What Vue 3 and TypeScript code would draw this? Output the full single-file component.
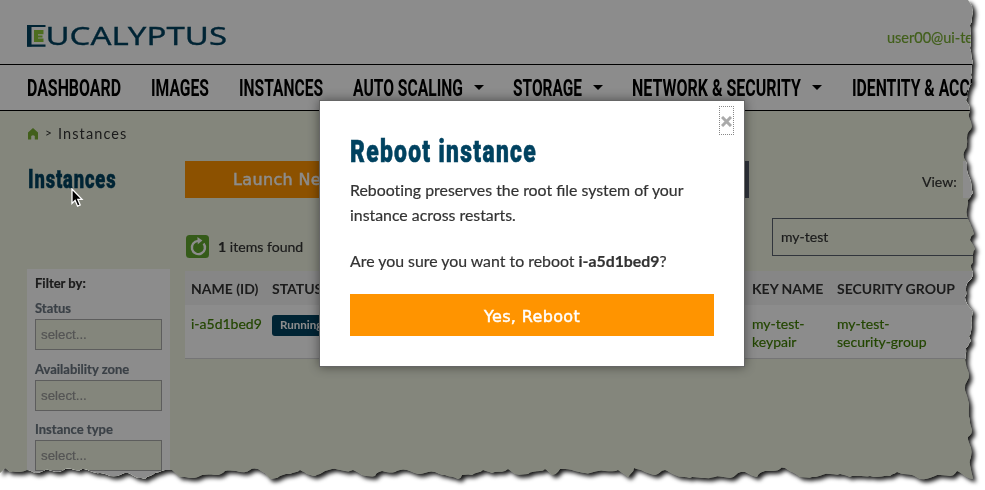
<script setup lang="ts">
interface NavItem { label: string; width: number; menu: boolean }
type Point = [number, number]

const nav: NavItem[] = [
  { label: 'DASHBOARD', width: 94, menu: false },
  { label: 'IMAGES', width: 58, menu: false },
  { label: 'INSTANCES', width: 84, menu: false },
  { label: 'AUTO SCALING', width: 110, menu: true },
  { label: 'STORAGE', width: 69, menu: true },
  { label: 'NETWORK & SECURITY', width: 169, menu: true },
  { label: 'IDENTITY & ACCESS', width: 146, menu: false },
]

const filters: string[] = ['Status', 'Availability zone', 'Instance type']

// Torn paper outline: right side top to bottom, then bottom side right to left.
const rightSide: Point[] = [
  [968, 0], [972, 6], [973, 12], [970, 25], [971, 35], [970, 48], [973, 62], [971, 75], [972, 83], [967, 94], [966, 100],
  [969, 105], [969, 114], [971, 122], [971, 129], [967, 138], [965, 150], [964, 158], [967, 164], [968, 174], [971, 182],
  [973, 193], [968, 200], [967, 216], [971, 226], [974, 234], [970, 240], [975, 249], [973, 258], [971, 265], [973, 272],
  [969, 281], [966, 290], [965, 297], [967, 304], [973, 312], [972, 325], [969, 336], [971, 341], [966, 348], [966, 364],
  [969, 375], [965, 388], [968, 400], [970, 420], [972, 430], [968, 437], [971, 448], [970, 460], [973, 479],
]
const bottomSide: Point[] = [
  [965, 476], [957, 471], [950, 476], [935, 476], [920, 479], [912, 475], [897, 472], [890, 476], [870, 476], [850, 477],
  [840, 474], [830, 474], [812, 477], [800, 477], [792, 472], [785, 468], [780, 469], [765, 471], [757, 477], [745, 472],
  [738, 473], [730, 478], [715, 477], [705, 478], [690, 478], [675, 475], [665, 470], [655, 475], [645, 472], [634, 468],
  [628, 477], [618, 470], [605, 471], [590, 473], [575, 471], [560, 469], [552, 475], [545, 469], [540, 471], [528, 474],
  [515, 474], [508, 469], [505, 471], [492, 473], [483, 470], [472, 475], [462, 475], [458, 479], [445, 475], [435, 472],
  [420, 474], [407, 470], [395, 472], [382, 471], [375, 476], [362, 475], [353, 470], [345, 471], [332, 469], [325, 471],
  [320, 474], [315, 476], [307, 474], [300, 470], [290, 474], [280, 476], [270, 479], [265, 473], [258, 469], [250, 470],
  [240, 472], [225, 471], [215, 475], [200, 476], [190, 478], [180, 477], [172, 470], [165, 470], [155, 473], [145, 479],
  [138, 478], [128, 473], [120, 475], [110, 476], [100, 473], [90, 471], [82, 469], [75, 470], [65, 469], [55, 472],
  [45, 470], [35, 473], [27, 470], [20, 472], [10, 472], [5, 468], [0, 473],
]

function roughen(points: Point[]): Point[] {
  const out: Point[] = []
  for (let i = 0; i < points.length - 1; i++) {
    const [ax, ay] = points[i]
    const [bx, by] = points[i + 1]
    const steps = Math.max(1, Math.round(Math.hypot(bx - ax, by - ay) / 3))
    for (let s = 0; s < steps; s++) {
      const t = s / steps
      const n = s === 0 ? 0 : Math.sin((i * 7 + s) * 12.9898) * 0.9
      out.push([ax + (bx - ax) * t + n, ay + (by - ay) * t + n])
    }
  }
  out.push(points[points.length - 1])
  return out
}

const outline: Point[] = [[0, 0], ...roughen([...rightSide, ...bottomSide])]
const tear: string = `polygon(${outline.map(([x, y]) => `${x.toFixed(1)}px ${y.toFixed(1)}px`).join(',')})`
</script>

<template>
  <div class="sheet">
    <div class="page" :style="{ clipPath: tear }">
      <header class="top">
        <svg class="logo" width="200" height="24" viewBox="0 0 200 24">
          <path d="M18.5 2H1.2V21.6H18.5" fill="none" stroke="#004260" stroke-width="2.2" />
          <path d="M0 1H4.5V22.6H0Z" fill="#004260" />
          <path d="M7 6H16.5V10.2H11V11.6H15.5V13.4H11V14.6H16.5V18H7Z" fill="#8cc63a" />
          <text x="18.5" y="21" textLength="181.5" lengthAdjust="spacingAndGlyphs">UCALYPTUS</text>
        </svg>
        <span class="user">user00@ui-test</span>
      </header>
      <nav class="nav">
        <a v-for="item in nav" :key="item.label" class="nav-item">
          <svg class="nav-label" :width="item.width" height="26">
            <text x="0" y="21" :textLength="item.width" lengthAdjust="spacingAndGlyphs">{{ item.label }}</text>
          </svg>
          <i v-if="item.menu" class="caret"></i>
        </a>
      </nav>

      <div class="crumbs">
        <svg width="12" height="12" viewBox="0 0 12 12"><path d="M6 0L11 4.6V11.5H7.8V8Q6 6.4 4.2 8V11.5H1V4.6Z" fill="#78ad32" /></svg>
        <span class="sep">&gt;</span>
        <span class="here">Instances</span>
      </div>

      <main class="main">
        <aside class="side">
          <svg class="title" width="90" height="37">
            <text x="1" y="26.5" textLength="88.5" lengthAdjust="spacingAndGlyphs">Instances</text>
          </svg>
          <section class="filters">
            <h4>Filter by:</h4>
            <div v-for="name in filters" :key="name" class="filter">
              <label>{{ name }}</label>
              <div class="select">select...</div>
            </div>
          </section>
        </aside>
        <section class="content">
          <div class="actions">
            <div class="launch">Launch New Instance</div>
            <div class="more"></div>
            <span class="view">View:</span>
            <div class="view-select"></div>
          </div>
          <div class="tools">
            <div class="count">
              <svg width="23" height="23" viewBox="0 0 23 23">
                <rect width="23" height="23" rx="3.5" fill="#62a62f" />
                <path d="M17.6 8.4A6.6 6.6 0 1 1 12 5.9" fill="none" stroke="#fff" stroke-width="2.4" />
                <path d="M11.4 2L16.4 5.6L11.8 9.2Z" fill="#fff" />
              </svg>
              <span><b>1</b> items found</span>
            </div>
            <div class="search">my-test</div>
          </div>
          <div class="table">
            <div class="row head">
              <span>NAME (ID)</span><span>STATUS</span><span>KEY NAME</span><span>SECURITY GROUP</span>
            </div>
            <div class="row">
              <a>i-a5d1bed9</a><span><em class="badge">Running</em></span><a>my-test-<br />keypair</a><a>my-test-<br />security-group</a>
            </div>
          </div>
        </section>
      </main>

      <div class="overlay">
        <div class="modal">
          <button class="close" type="button" aria-label="Close">
            <svg width="11" height="11" viewBox="0 0 11 11"><path d="M1 1L10 10M10 1L1 10" stroke="#aaa" stroke-width="3" /></svg>
          </button>
          <svg class="modal-title" width="190" height="36">
            <text x="0" y="24.5" textLength="187" lengthAdjust="spacingAndGlyphs">Reboot instance</text>
          </svg>
          <p class="lead"><span class="plain">Rebooting</span> preserves the root file system of your<br />instance across restarts.</p>
          <p class="ask">Are you sure you want to reboot <b>i-a5d1bed9</b>?</p>
          <button class="confirm" type="button">Yes, Reboot</button>
        </div>
      </div>

      <svg class="pointer" width="13" height="20" viewBox="0 0 13 20">
        <path d="M1 1V15.4L4.1 12.4L6.6 18.2L9.2 17L6.8 11.4H11Z" fill="#000" stroke="#fff" stroke-width="1.3" />
      </svg>
    </div>
  </div>
</template>

<style>
html, body { margin: 0; background: #fff; }
</style>

<style scoped>
* { box-sizing: border-box; }
.sheet {
  width: 985px; height: 490px; overflow: hidden;
  font-family: Lato, "Liberation Sans", sans-serif; color: #333;
  -webkit-text-stroke: 0.2px;
  filter: drop-shadow(3px 3px 2px rgba(0, 0, 0, 0.9));
}
.page { position: relative; width: 985px; height: 490px; overflow: hidden; background: #f0f5e2; }
.top { display: flex; justify-content: space-between; height: 64px; padding: 24px 0 0 27px; background: #fff; }
.logo { display: block; overflow: visible; }
.logo text { font: 400 24.5px "Noto Sans", sans-serif; fill: #004260; stroke: #004260; stroke-width: 0.3px; }
.user { width: 98px; padding-top: 5px; font-size: 14.5px; line-height: 18px; color: #78ad32; white-space: nowrap; }
.nav {
  display: flex; gap: 30px; height: 47px; padding: 10px 0 0 27px;
  background: #fff; border-top: 1px solid #000; border-bottom: 1px solid #000;
}
.nav-item { display: flex; flex: none; gap: 10.5px; }
.nav-item:nth-child(n + 5) { margin-left: -0.3px; }
.nav-label { overflow: visible; }
.nav-label text { font: 700 23.5px Roboto, sans-serif; fill: #000; }
.caret { width: 0; height: 0; margin-top: 10px; border: 5px solid transparent; border-top-color: #000; border-bottom: 0; }
.crumbs { display: flex; align-items: center; height: 50px; padding: 0 0 5px 27px; font-size: 14.5px; -webkit-text-stroke: 0; }
.sep { margin: -3px 6px 0 6px; font-size: 12px; }
.here { letter-spacing: 1.1px; }
.main { display: flex; gap: 15px; padding-left: 27px; }
.side { width: 143px; }
.title { display: block; overflow: visible; }
.title text { font: 900 25px Roboto, sans-serif; letter-spacing: 1.2px; fill: #004260; stroke: #004260; stroke-width: 0.5px; }
.filters { height: 260px; margin-top: 71px; padding: 5px 8px; background: #fff; }
.filters h4 { margin: 0 0 8px; font-size: 13px; line-height: 18px; }
.filter { height: 60.5px; }
.filter label { display: block; height: 19px; font-weight: 700; font-size: 13px; line-height: 17px; color: #6b7680; }
.select {
  width: 127px; height: 31px; padding-left: 5px; border: 1px solid #aaa; background: #f0f5e2;
  font: 13.3px/29px "Liberation Sans", sans-serif; color: #999;
}
.content { flex: 1; }
.actions { display: flex; height: 37px; }
.launch {
  width: 260px; padding-left: 48px; background: #ff9400; color: #fff; letter-spacing: 0.35px;
  font: 16px/38px "DejaVu Sans", sans-serif; white-space: nowrap; -webkit-text-stroke: 0.45px;
}
.more { width: 304px; background: #59626e; }
.view { width: 41px; margin-left: 173px; font-size: 14px; line-height: 42px; }
.view-select { flex: 1; background: #fff; }
.tools { display: flex; height: 73px; padding-top: 20px; }
.count { display: flex; gap: 9px; width: 587px; padding: 17px 0 0 1px; font-size: 14.1px; line-height: 23px; }
.search {
  width: 240px; height: 38px; padding-left: 8px; border: 1px solid #59626e;
  font-size: 14px; line-height: 36px;
}
.table { background: #fff; border-bottom: 1px solid #d5d5d8; }
.row { display: grid; grid-template-columns: 81px 480px 85px 1fr; height: 53px; padding: 10px 0 0 6px; font-size: 14px; line-height: 18px; }
.row.head { height: 34px; padding-top: 0; background: #f4f4f4; font-weight: 700; line-height: 35px; white-space: nowrap; -webkit-text-stroke: 0; }
.row a { color: #3f7f00; }
.badge {
  display: inline-block; height: 21px; padding: 0 8px; border-radius: 3px;
  background: #004260; color: #fff; font: 700 11.6px/20px Lato, sans-serif; -webkit-text-stroke: 0;
}
.overlay { position: absolute; inset: 0; padding: 100px 0 0 319px; background: rgba(0, 0, 0, 0.45); }
.modal {
  position: relative; width: 426px; height: 267px; padding: 36px 30px 0; background: #fff;
  border: 1px solid #666; box-shadow: 0 0 10px rgba(0, 0, 0, 0.45);
}
.close {
  position: absolute; top: 5px; right: 10px; width: 15px; height: 29px; padding: 2px 0 0;
  border: 1px dotted #888; background: none; line-height: 0;
}
.modal-title { display: block; overflow: visible; }
.modal-title text { font: 900 31.5px Roboto, sans-serif; letter-spacing: 1.8px; fill: #004260; stroke: #004260; stroke-width: 0.6px; }
.lead, .ask { margin: 4px 0 0; font-size: 15.86px; line-height: 25px; white-space: nowrap; }
.plain { font-variant-ligatures: none; }
.ask { margin-top: 21px; }
.confirm {
  width: 364px; height: 42px; margin-top: 21px; padding: 2px 0 0; border: 0; background: #ff9400;
  color: #fff; font: 16px "DejaVu Sans", sans-serif; letter-spacing: 0.35px; -webkit-text-stroke: 0.45px;
}
.pointer { position: absolute; left: 71px; top: 188px; }
</style>
